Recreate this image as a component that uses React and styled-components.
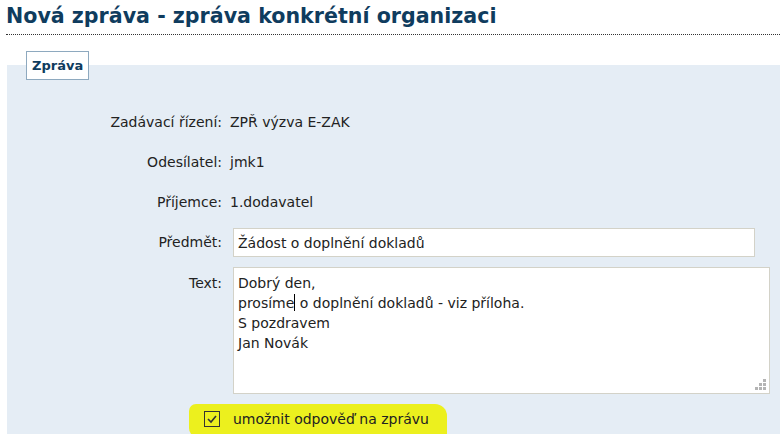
import React from "react";
import styled, { createGlobalStyle } from "styled-components";

const GlobalStyle = createGlobalStyle`
  body {
    margin: 0;
    background: #ffffff;
    font-family: "DejaVu Sans", "Liberation Sans", sans-serif;
    color: #222;
    overflow: hidden;
  }
`;

const Page = styled.div`
  width: 780px;
  height: 434px;
  overflow: hidden;
`;

const Title = styled.h1`
  margin: 0 0 0 6px;
  padding-top: 1px;
  height: 33px;
  font-size: 20.6px;
  line-height: 31px;
  font-weight: bold;
  color: #0f3c5e;
  border-bottom: 1px dotted #333;
  white-space: nowrap;
`;

const Panel = styled.div`
  margin: 30px 0 0 7px;
  background: #e5edf5;
  min-height: 380px;
`;

const Tab = styled.div`
  display: inline-block;
  position: relative;
  top: -14px;
  margin-left: 19px;
  height: 27px;
  padding: 0 5px;
  border: 1px solid #8ea9bf;
  background: #fff;
  color: #0f3c5e;
  font-weight: bold;
  font-size: 13px;
  line-height: 27px;
`;

const Form = styled.div`
  display: grid;
  grid-template-columns: 215px 1fr;
  column-gap: 8px;
  margin-top: 8px;
`;

const Label = styled.div`
  text-align: right;
  font-size: 14px;
  padding-top: ${(p) => (p.top ? "7px" : "0")};
  align-self: ${(p) => (p.top ? "start" : "center")};
  line-height: ${(p) => (p.top ? "28px" : "40px")};
  white-space: nowrap;
`;

const Value = styled.div`
  display: flex;
  align-items: center;
  min-height: 40px;
  font-size: 14px;
  padding: ${(p) => p.pad || "0"};
`;

const Input = styled.div`
  box-sizing: border-box;
  margin-left: 3px;
  width: 522px;
  height: 29px;
  padding: 0 4px;
  border: 1px solid #d3d2c8;
  background: #fff;
  font-size: 14px;
  line-height: 28px;
`;

const TextBox = styled.div`
  position: relative;
  box-sizing: border-box;
  margin-left: 3px;
  width: 537px;
  height: 127px;
  padding: 5px 4px;
  border: 1px solid #d3d2c8;
  background: #fff;
  font-size: 14px;
  line-height: 20px;
`;

const Caret = styled.span`
  display: inline-block;
  width: 1px;
  height: 17px;
  margin: 0 0 -3px 0;
  background: #000;
`;

const Grip = styled.svg`
  position: absolute;
  right: 2px;
  bottom: 2px;
`;

const CheckRow = styled.div`
  grid-column: 1 / 3;
  padding: 10px 0 0 182px;
`;

const Highlight = styled.label`
  display: inline-flex;
  align-items: center;
  gap: 13px;
  height: 30px;
  padding: 0 18px 4px 15px;
  background: #ecf01e;
  border-radius: 7px 12px 4px 10px;
  font-size: 14px;
  color: #222;
`;

const Box = styled.span`
  display: inline-flex;
  align-items: center;
  justify-content: center;
  box-sizing: border-box;
  width: 16px;
  height: 16px;
  border: 1px solid #333;
`;

const rows = [
  ["Zadávací řízení:", "ZPŘ výzva E-ZAK"],
  ["Odesílatel:", "jmk1"],
  ["Příjemce:", "1.dodavatel"],
];

const App = () => {
  return (
    <Page>
      <GlobalStyle />
      <Title>Nová zpráva - zpráva konkrétní organizaci</Title>
      <Panel>
        <Tab>Zpráva</Tab>
        <Form>
          {rows.map(([label, value]) => (
            <React.Fragment key={label}>
              <Label>{label}</Label>
              <Value>{value}</Value>
            </React.Fragment>
          ))}
          <Label>Předmět:</Label>
          <Value>
            <Input>Žádost o doplnění dokladů</Input>
          </Value>
          <Label top>Text:</Label>
          <Value pad="5px 0 0">
            <TextBox>
              Dobrý den,
              <br />
              prosíme<Caret /> o doplnění dokladů - viz příloha.
              <br />
              S pozdravem
              <br />
              Jan Novák
              <Grip width="12" height="12" viewBox="0 0 12 12">
                <g fill="#b4b4b4">
                  <rect x="8" y="0" width="3" height="3" />
                  <rect x="4" y="4" width="3" height="3" />
                  <rect x="8" y="4" width="3" height="3" />
                  <rect x="0" y="8" width="3" height="3" />
                  <rect x="4" y="8" width="3" height="3" />
                  <rect x="8" y="8" width="3" height="3" />
                </g>
              </Grip>
            </TextBox>
          </Value>
          <CheckRow>
            <Highlight>
              <Box>
                <svg width="12" height="10" viewBox="0 0 12 10">
                  <path d="M2 5 L5 8 L10 2" fill="none" stroke="#333" strokeWidth="1.6" />
                </svg>
              </Box>
              umožnit odpověď na zprávu
            </Highlight>
          </CheckRow>
        </Form>
      </Panel>
    </Page>
  );
};

export default App;
